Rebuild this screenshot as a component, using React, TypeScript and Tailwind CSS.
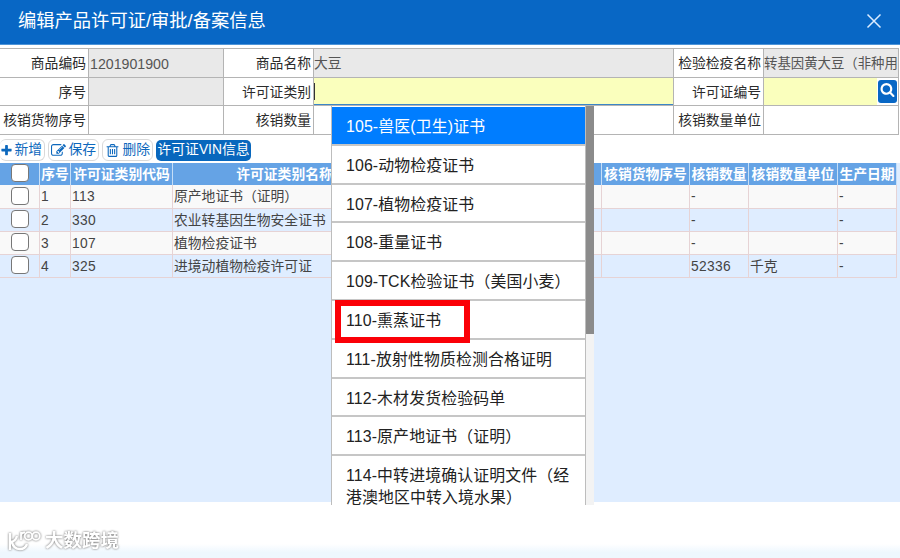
import React from "react";

const PLUS =
  "M1600 736v192q0 40-28 68t-68 28h-416v416q0 40-28 68t-68 28h-192q-40 0-68-28t-28-68v-416h-416q-40 0-68-28t-28-68v-192q0-40 28-68t68-28h416v-416q0-40 28-68t68-28h192q40 0 68 28t28 68v416h416q40 0 68 28t28 68z";
const EDIT =
  "M888 1184l116-116-152-152-116 116v56h96v96h56zm440-720q-16-16-33 1l-350 350q-17 17-1 33t33-1l350-350q17-17 1-33zm80 594v190q0 119-84.5 203.5t-203.5 84.5h-832q-119 0-203.5-84.5t-84.5-203.5v-832q0-119 84.5-203.5t203.5-84.5h832q63 0 117 25 15 7 18 23 3 17-9 29l-49 49q-14 14-32 8-23-6-45-6h-832q-66 0-113 47t-47 113v832q0 66 47 113t113 47h832q66 0 113-47t47-113v-126q0-13 9-22l64-64q15-15 35-7t20 29zm-96-738l288 288-672 672h-288v-288zm444 132l-92 92-288-288 92-92q28-28 68-28t68 28l152 152q28 28 28 68t-28 68z";
const TRASH =
  "M704 736v576q0 14-9 23t-23 9h-64q-14 0-23-9t-9-23v-576q0-14 9-23t23-9h64q14 0 23 9t9 23zm256 0v576q0 14-9 23t-23 9h-64q-14 0-23-9t-9-23v-576q0-14 9-23t23-9h64q14 0 23 9t9 23zm256 0v576q0 14-9 23t-23 9h-64q-14 0-23-9t-9-23v-576q0-14 9-23t23-9h64q14 0 23 9t9 23zm128 724v-948h-896v948q0 22 7 40.5t14.5 27 10.5 8.5h832q3 0 10.5-8.5t14.5-27 7-40.5zm-672-1076h448l-48-117q-7-9-17-11h-317q-10 2-17 11zm928 32v64q0 14-9 23t-23 9h-96v948q0 83-47 143.5t-113 60.5h-832q-66 0-113-58.5t-47-141.5v-952h-96q-14 0-23-9t-9-23v-64q0-14 9-23t23-9h309l70-167q15-37 54-63t79-26h320q40 0 79 26t54 63l70 167h309q14 0 23 9t9 23z";
const SEARCH =
  "M1216 832q0-185-131.5-316.5t-316.5-131.5-316.5 131.5-131.5 316.5 131.5 316.5 316.5 131.5 316.5-131.5 131.5-316.5zm512 832q0 52-38 90t-90 38q-54 0-90-38l-343-342q-179 124-399 124-143 0-273.5-55.5t-225-150-150-225-55.5-273.5 55.5-273.5 150-225 225-150 273.5-55.5 273.5 55.5 225 150 150 225 55.5 273.5q0 220-124 399l343 343q37 37 37 90z";

function Icon({ d, className }: { d: string; className: string }) {
  return (
    <svg viewBox="0 0 1792 1792" fill="currentColor" className={className}>
      <path d={d} />
    </svg>
  );
}

function Label({ children }: { children: string }) {
  return (
    <div className="flex items-center justify-end border-r border-b border-[#b4b4b4] bg-white pt-0.5 pr-0.5 whitespace-nowrap text-[#2b2b2b]">
      {children}
    </div>
  );
}

function Field({ children, className = "" }: { children?: React.ReactNode; className?: string }) {
  return (
    <div
      className={`flex items-center overflow-hidden border-r border-b border-[#b4b4b4] whitespace-nowrap text-[#555] ${className}`}
    >
      {children}
    </div>
  );
}

function ToolButton({ icon, label, className }: { icon: string; label: string; className: string }) {
  return (
    <button
      className={`flex h-[22px] items-center justify-between rounded-md border border-[#d9d9d9] bg-white whitespace-nowrap text-[#0d68bd] ${className}`}
    >
      <Icon d={icon} className="size-[15px] shrink-0" />
      {label}
    </button>
  );
}

const headers = ["序号", "许可证类别代码", "许可证类别名称", "", "核销货物序号", "核销数量", "核销数量单位", "生产日期"];

const rows = [
  ["1", "113", "原产地证书（证明）", "", "", "-", "", "-"],
  ["2", "330", "农业转基因生物安全证书", "", "", "-", "", "-"],
  ["3", "107", "植物检疫证书", "", "", "-", "", "-"],
  ["4", "325", "进境动植物检疫许可证", "", "", "52336", "千克", "-"],
];

const options = [
  "105-兽医(卫生)证书",
  "106-动物检疫证书",
  "107-植物检疫证书",
  "108-重量证书",
  "109-TCK检验证书（美国小麦）",
  "110-熏蒸证书",
  "111-放射性物质检测合格证明",
  "112-木材发货检验码单",
  "113-原产地证书（证明）",
  "114-中转进境确认证明文件（经港澳地区中转入境水果）",
];

const tableGrid = "grid grid-cols-[40px_31px_102px_224px_205px_88px_59px_89px_59px]";

function Check() {
  return <span className="size-[18px] rounded-[4px] border-[1.5px] border-[#777] bg-white" />;
}

function OptionList() {
  return (
    <div className="absolute top-[106px] left-[331px] flex h-[399px] w-[263px] overflow-hidden bg-[#f3f3f3]">
      <div className="w-[255px] shrink-0 border-x border-[#bdbdbd] bg-white pt-px">
        {options.map((text, i) => (
          <div
            key={text}
            className={`border-b-2 border-[#c6c6c6] pt-[9px] pr-2.5 pl-3.5 text-[15.9px] leading-[22px] tracking-[0.12px] ${
              i === 0 ? "h-[38.8px] bg-[#007dff] text-white" : i === 9 ? "h-[62px] text-[#222]" : "h-[38.8px] text-[#222]"
            }`}
          >
            {text}
          </div>
        ))}
      </div>
      <div className="h-[228px] w-2 bg-[#8b8b8b]" />
    </div>
  );
}

function Watermark() {
  return (
    <div className="flex items-center gap-1 pl-2 text-white drop-shadow-[0_0_1px_#666]">
      <svg viewBox="0 0 33 22" className="h-[22px] w-[33px]" fill="none" stroke="currentColor">
        <path d="M2 3v17M2 12c4 0 6-2 7-6M4 12c1 5 4 7 8 7 4 0 6-2 7-5" strokeWidth="2.4" />
        <path d="M13 10V2M13 6c0-2 1-3.500 4-3.500" strokeWidth="1.8" />
        <circle cx="20.500" cy="6" r="3.800" strokeWidth="1.8" />
        <circle cx="28" cy="6" r="3.800" strokeWidth="1.8" />
      </svg>
      <span className="text-[18.5px] leading-[22px] font-bold">大数跨境</span>
    </div>
  );
}

export default function App() {
  return (
    <div className="relative flex h-[558px] w-[900px] flex-col overflow-hidden bg-white font-['Liberation_Sans','Noto_Sans_CJK_SC',sans-serif] text-[13.8px] leading-5">
      <header className="flex h-[45px] shrink-0 items-center justify-between border-b border-[#4d94d8] bg-[#0867c5] pr-[18px] pb-[2px] pl-[18px] text-white">
        <h1 className="text-[18.3px] leading-6">编辑产品许可证/审批/备案信息</h1>
        <svg viewBox="0 0 16 16" className="size-4" fill="none" stroke="#dcecff" strokeWidth="1.5">
          <path d="M1.5 1.5l13 13M14.5 1.5l-13 13" />
        </svg>
      </header>

      <section className="mt-[3px] grid h-[87px] w-[899px] shrink-0 grid-cols-[89px_135px_90px_360px_90px_135px] grid-rows-[29px_28px_29px] border-t border-[#b4b4b4]">
        <Label>商品编码</Label>
        <Field className="bg-[#e9e9e9] pt-0.5 pl-px text-[14.2px]">1201901900</Field>
        <Label>商品名称</Label>
        <Field className="bg-[#e9e9e9] pt-0.5">大豆</Field>
        <Label>检验检疫名称</Label>
        <Field className="bg-[#e9e9e9] pt-0.5 text-[13.4px]">转基因黄大豆（非种用</Field>

        <Label>序号</Label>
        <Field className="bg-[#e9e9e9]" />
        <Label>许可证类别</Label>
        <Field className="bg-[#faffbd] shadow-[inset_0_-1px_0_#3b86c8]">
          <span className="h-[17px] w-px bg-[#333]" />
        </Field>
        <Label>许可证编号</Label>
        <Field className="justify-end bg-[#faffbd]">
          <span className="flex h-full w-[21px] items-center bg-white pr-px pl-px">
            <span className="flex h-[23px] w-[19px] items-center justify-center rounded-[3px] bg-[#0867c5] pb-1 text-white">
              <Icon d={SEARCH} className="size-[15px]" />
            </span>
          </span>
        </Field>

        <Label>核销货物序号</Label>
        <Field />
        <Label>核销数量</Label>
        <Field />
        <Label>核销数量单位</Label>
        <Field />
      </section>

      <div className="flex h-[28px] shrink-0 items-center pt-0.5">
        <ToolButton icon={PLUS} label="新增" className="w-[45px] border-l-0 pr-0.5 pl-0 [&>svg]:size-[13px]" />
        <ToolButton icon={EDIT} label="保存" className="ml-[3px] w-[51px] px-0.5" />
        <ToolButton icon={TRASH} label="删除" className="ml-[3px] w-[51px] px-0.5" />
        <button className="ml-[3px] flex h-[21px] w-[95px] items-center justify-center rounded-[5px] bg-[#0867bd] text-[13.8px] whitespace-nowrap text-white">
          许可证VIN信息
        </button>
      </div>

      <main className="h-[339px] shrink-0 bg-[#dfedff]">
        <div className={`${tableGrid} h-[22px] w-[897px] bg-[#65a3e5] font-bold text-white`}>
          <div className="flex items-center justify-center border-r border-[#c5def7] pb-[3px]">
            <Check />
          </div>
          {headers.map((h, i) => (
            <div key={i} className="flex items-center justify-center border-r border-[#c5def7] pt-px whitespace-nowrap">
              {h}
            </div>
          ))}
        </div>
        {rows.map((row, r) => (
          <div
            key={r}
            className={`${tableGrid} w-[897px] border-b border-[#e6d3d5] ${r === 0 ? "h-[24px]" : "h-[23px]"} ${r % 2 ? "bg-[#dfedff]" : "bg-[#f9f9f9]"}`}
          >
            <div className="flex items-center justify-center border-r border-[#e6d3d5] pb-0.5">
              <Check />
            </div>
            {row.map((cell, c) => (
              <div
                key={c}
                className={`flex items-center border-r border-[#e6d3d5] pt-px pl-px whitespace-nowrap text-[#444] ${/^\d/.test(cell) ? "tracking-[0.3px]" : ""}`}
              >
                {cell}
              </div>
            ))}
          </div>
        ))}
      </main>

      <footer className="flex flex-1 flex-col justify-end bg-linear-to-b from-white from-75% to-[#eef7fe] to-90% pb-[6px]">
        <Watermark />
      </footer>

      <OptionList />
      <div className="absolute top-[300px] left-[335px] h-[43px] w-[135px] border-6 border-[#fb0007]" />
    </div>
  );
}
